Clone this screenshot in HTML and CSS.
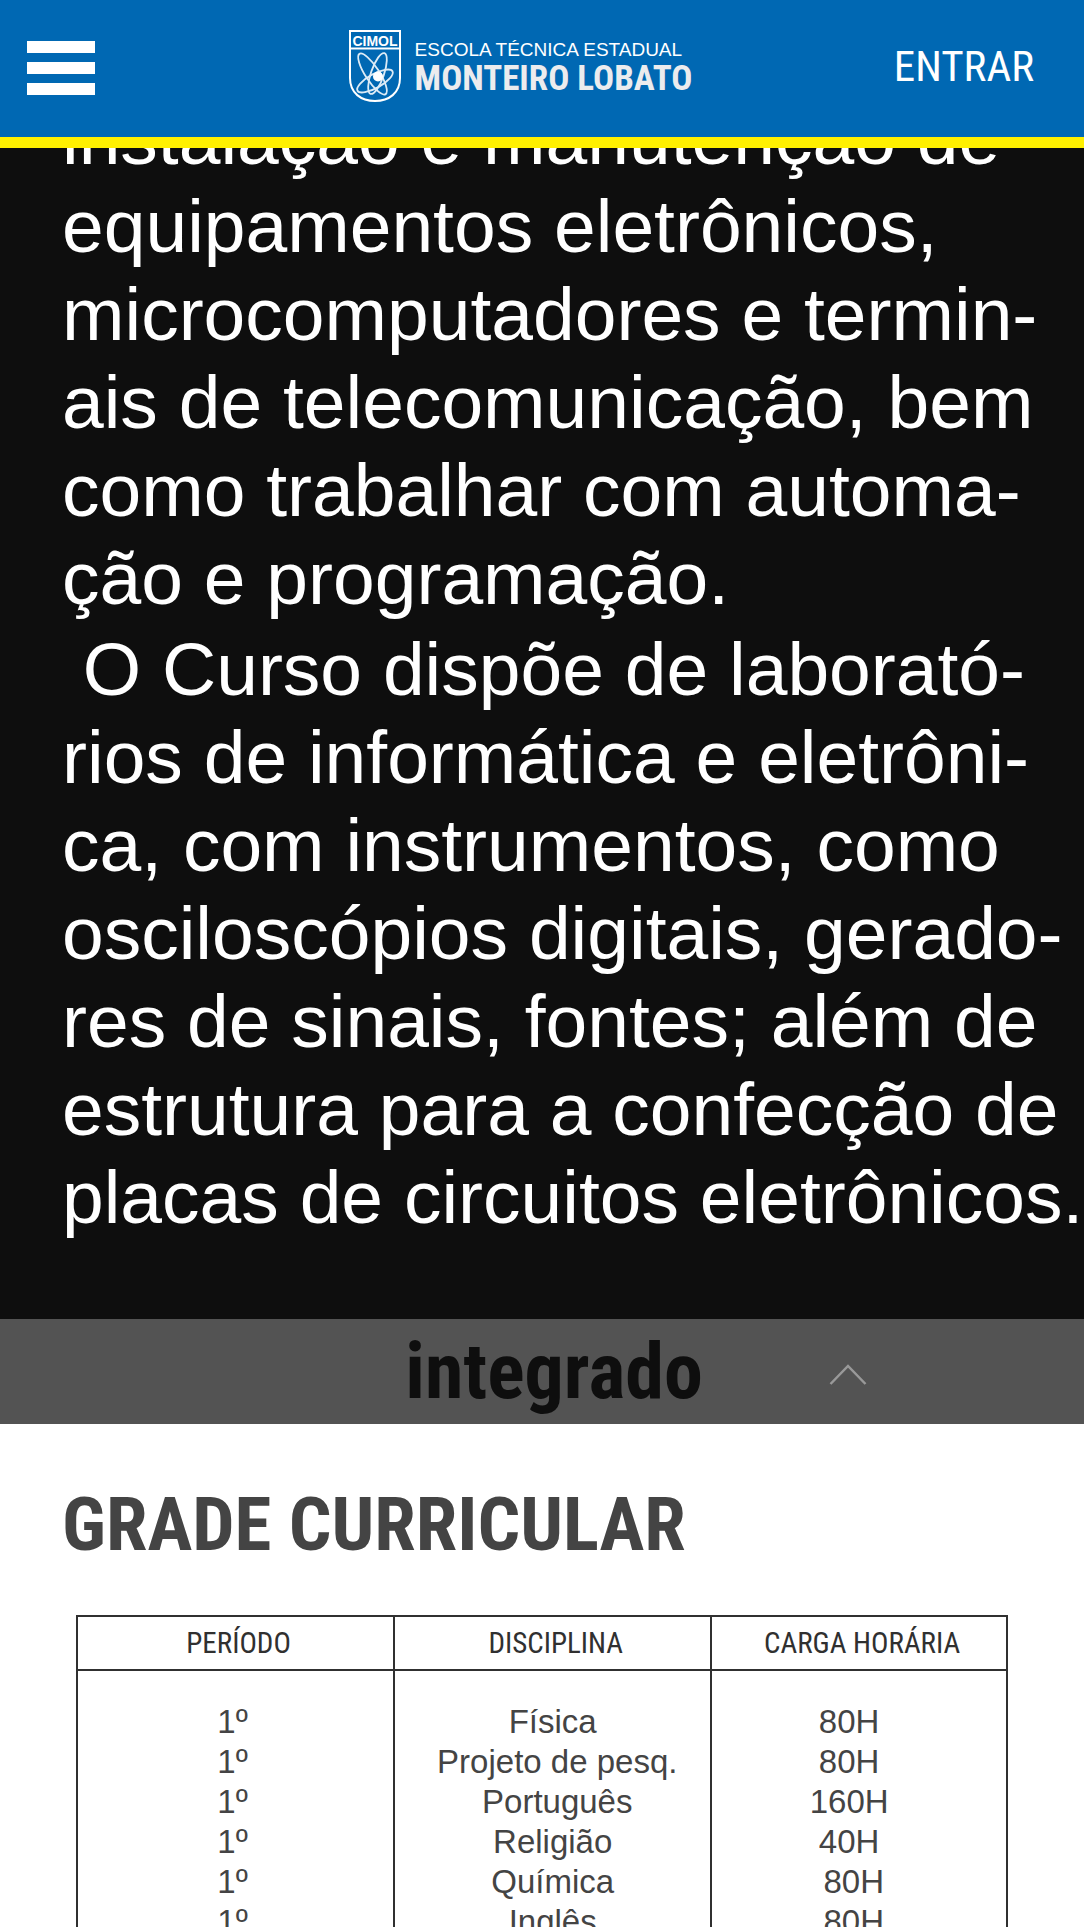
FILE: index.html
```html
<!DOCTYPE html>
<html lang="pt-BR">
<head>
<meta charset="utf-8">
<meta name="viewport" content="width=device-width, initial-scale=1">
<title>CIMOL - Curso de Eletrônica</title>
<link rel="stylesheet" href="styles.css">
</head>
<body>
<header class="topbar">
  <button class="menu" type="button" aria-label="Abrir menu"><span class="menu-bar"></span><span class="menu-bar"></span><span class="menu-bar"></span></button>
  <a class="brand" href="#">
    <svg class="crest" viewBox="0 0 52 72" width="52" height="72" aria-hidden="true">
      <path d="M1 1H51V48C51 63 40 71 26 71S1 63 1 48Z" fill="none" stroke="#fff" stroke-width="2"/>
      <path d="M1 18.500H51" stroke="#fff" stroke-width="2"/>
      <text class="crest-name" x="26" y="15.500" text-anchor="middle">CIMOL</text>
      <g fill="none" stroke="#dcebf6" stroke-width="1.800">
        <ellipse cx="23.500" cy="44" rx="24" ry="7" transform="rotate(57 23.500 44)"/>
        <ellipse cx="28.500" cy="43.500" rx="21.500" ry="6.500" transform="rotate(-71 28.500 43.500)"/>
        <ellipse cx="26" cy="51" rx="20" ry="7" transform="rotate(-29 26 51)"/>
      </g>
      <circle cx="29" cy="46.500" r="5" fill="#fff"/>
    </svg>
    <span class="brand-text">
      <span class="brand-top">ESCOLA TÉCNICA ESTADUAL</span>
      <span class="brand-main">MONTEIRO LOBATO</span>
    </span>
  </a>
  <a class="login" href="#">ENTRAR</a>
</header>
<main class="page">
  <section class="intro">
    <p>instalação e manutenção de<br>equipamentos eletrônicos,<br>microcomputadores e termin-<br>ais de telecomunicação, bem<br>como trabalhar com automa-<br>ção e programação.</p>
    <p>&nbsp;O Curso dispõe de laborató-<br>rios de informática e eletrôni-<br>ca, com instrumentos, como<br>osciloscópios digitais, gerado-<br>res de sinais, fontes; além de<br>estrutura para a confecção de<br>placas de circuitos eletrônicos.</p>
  </section>
  <button class="accordion" type="button" aria-expanded="true">
    <span class="accordion-label">integrado</span>
    <svg class="chevron" viewBox="0 0 38 22" width="38" height="22" aria-hidden="true"><path d="M1.500 20 19 2 36.500 20" fill="none" stroke="#999" stroke-width="2.500"/></svg>
  </button>
  <section class="curriculum">
    <h2>GRADE CURRICULAR</h2>
    <table>
      <thead>
        <tr><th scope="col">PERÍODO</th><th scope="col">DISCIPLINA</th><th scope="col">CARGA HORÁRIA</th></tr>
      </thead>
      <tbody>
        <tr><td>1º</td><td>Física</td><td>80H</td></tr>
        <tr><td>1º</td><td>&nbsp;Projeto de pesq.</td><td>80H</td></tr>
        <tr><td>1º</td><td>&nbsp;Português</td><td>160H</td></tr>
        <tr><td>1º</td><td>Religião</td><td>40H</td></tr>
        <tr><td>1º</td><td>Química</td><td>&nbsp;80H</td></tr>
        <tr><td>1º</td><td>Inglês</td><td>&nbsp;80H</td></tr>
      </tbody>
    </table>
  </section>
</main>
</body>
</html>
```
FILE: styles.css
```css
* { box-sizing: border-box; }

body {
  margin: 0;
  height: 100vh;
  overflow: hidden;
  background: #fff;
  color: #444;
  font-family: "Liberation Sans", Arial, sans-serif;
}

a { color: inherit; text-decoration: none; }

button { border: 0; padding: 0; font: inherit; cursor: pointer; }

.topbar {
  position: fixed;
  inset: 0 0 auto;
  z-index: 1;
  display: grid;
  grid-template-columns: 48fr auto 51fr;
  align-items: center;
  height: 148px;
  padding: 0 50px 0 27px;
  background: #0068b3;
  border-bottom: 11px solid #fff000;
  color: #fff;
}

.menu {
  display: flex;
  flex-direction: column;
  gap: 9px;
  width: 68px;
  padding-bottom: 2px;
  background: none;
}

.menu-bar { height: 12px; background: #fff; }

.brand { display: flex; gap: 14px; padding-bottom: 6px; }

.crest { flex: none; }

.crest-name { font: bold 14px "Liberation Sans", Arial, sans-serif; fill: #fff; }

.brand-text { display: flex; flex-direction: column; padding-top: 8px; white-space: nowrap; }

.brand-top { font-size: 19px; line-height: 23px; }

.brand-main {
  color: #ececee;
  font: bold 35px/36px "Roboto Condensed", "Arial Narrow", sans-serif;
}

.login {
  justify-self: end;
  padding-bottom: 6px;
  font: 43px/48px "Roboto Condensed", "Arial Narrow", sans-serif;
}

.intro {
  padding: 94px 0 78px 62px;
  overflow: hidden;
  background: #0e0e0e;
  color: #fff;
  font-size: 75px;
  line-height: 88px;
  white-space: nowrap;
}

.intro p { margin: 0; }

.intro p + p { margin-top: 3px; }

.accordion {
  display: grid;
  grid-template-columns: 1fr auto 1fr;
  align-items: center;
  width: 100%;
  height: 105px;
  padding-left: 24px;
  background: #535353;
  color: #0e0e0e;
}

.accordion-label {
  grid-column: 2;
  font: bold 78px/88px "Roboto Condensed", "Arial Narrow", sans-serif;
}

.chevron { margin: 6px 0 0 126px; }

.curriculum { padding: 56px 76px 0; }

h2 {
  margin: 0 0 47px -14px;
  font: bold 75px/88px "Roboto Condensed", "Arial Narrow", sans-serif;
}

table {
  width: 100%;
  border-collapse: collapse;
  table-layout: fixed;
}

th, td { border: 2px solid #303030; text-align: center; }

th:nth-child(-n+2) { width: 34.1%; }

th {
  height: 54px;
  padding: 0 0 0 6px;
  color: #303030;
  font: 29px/40px "Roboto Condensed", "Arial Narrow", sans-serif;
}

td {
  padding: 0;
  border-width: 0 2px;
  font-size: 33px;
  line-height: 40px;
}

td:first-child { padding-right: 6px; }

td:last-child { padding-right: 20px; }

tbody tr:first-child td { padding-top: 31px; }
```
